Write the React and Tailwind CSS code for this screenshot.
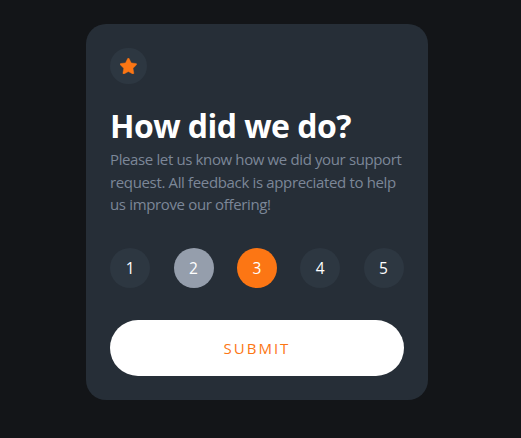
import React, { useState } from 'react';

const ratings = [1, 2, 3, 4, 5];

const ratingClass = (value, selected, hovered) => {
  if (value === selected) return 'bg-[#fc7614]';
  if (value === hovered) return 'bg-[#959eac]';
  return 'bg-[#2d3741]';
};

const App = () => {
  const [selected, setSelected] = useState(3);
  const [hovered, setHovered] = useState(2);

  return (
    <main className="h-screen flex flex-col bg-[#131518] pt-6 font-['Open_Sans','Segoe_UI',sans-serif]">
      <div className="w-[342px] h-[376px] ml-[86px] p-6 rounded-[20px] bg-[#262e37] flex flex-col">
        {/* Star Icon */}
        <div className="w-[37px] h-9 rounded-full bg-[#2d3741] flex items-center justify-center">
          <svg width="17" height="16" viewBox="0 0 17 16" fill="#fc7614" stroke="#fc7614" strokeWidth="0.4">
            <path d="m9.067.43 1.99 4.031c.112.228.33.386.58.422l4.45.647a.772.772 0 0 1 .427 1.316l-3.22 3.138a.773.773 0 0 0-.222.683l.76 4.431a.772.772 0 0 1-1.12.813l-3.98-2.092a.773.773 0 0 0-.718 0l-3.98 2.092a.772.772 0 0 1-1.119-.813l.76-4.431a.77.77 0 0 0-.222-.683L.233 6.846A.772.772 0 0 1 .661 5.53l4.449-.647a.772.772 0 0 0 .58-.422L7.68.43a.774.774 0 0 1 1.387 0Z" />
          </svg>
        </div>

        <h1 className="mt-[18px] text-[32px] leading-[48px] font-bold text-white whitespace-nowrap tracking-[-0.54px]">
          How did we do?
        </h1>
        <p className="mt-[-2px] text-[15px] leading-[22.5px] text-[#7c8798] whitespace-nowrap">
          <span className="block tracking-[-0.37px]">Please let us know how we did your support</span>
          <span className="block tracking-[-0.35px]">request. All feedback is appreciated to help</span>
          <span className="block tracking-[-0.35px]">us improve our offering!</span>
        </p>

        {/* Ratings */}
        <div className="mt-auto pl-[0.22px] flex gap-[23.34px]">
          {ratings.map((value) => (
            <button
              key={value}
              onClick={() => setSelected(value)}
              onMouseEnter={() => setHovered(value)}
              className={`size-10 shrink-0 pt-0.5 rounded-full text-[15.5px] text-white ${ratingClass(value, selected, hovered)}`}
            >
              {value}
            </button>
          ))}
        </div>

        <button className="mt-8 h-14 shrink-0 rounded-full bg-white text-[15px] tracking-[2px] text-[#fc7614]">
          SUBMIT
        </button>
      </div>
    </main>
  );
};

export default App;
